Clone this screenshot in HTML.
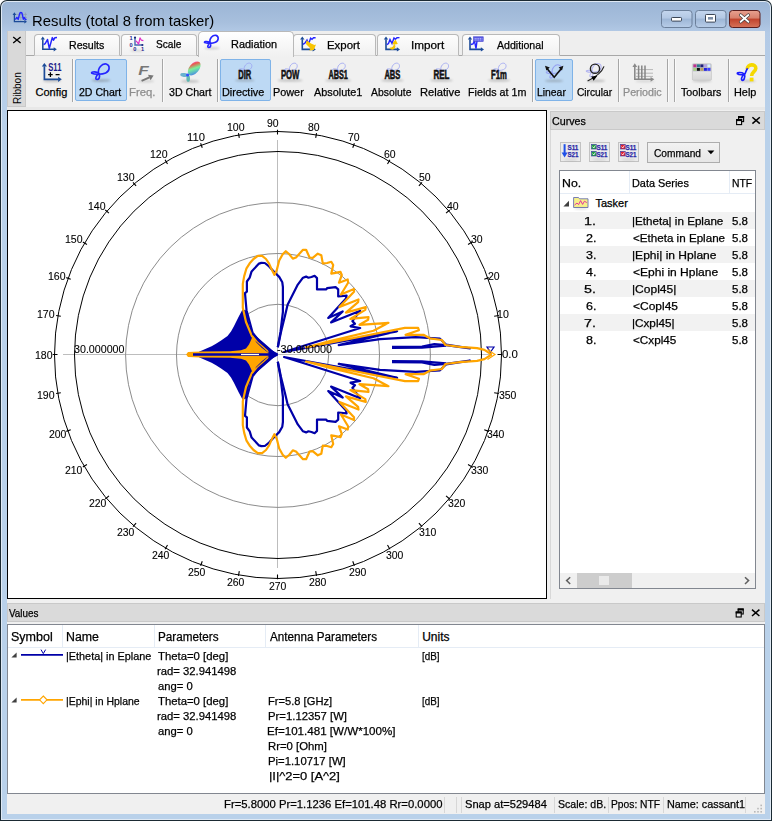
<!DOCTYPE html><html><head><meta charset="utf-8"><style>
*{box-sizing:border-box}
html,body{margin:0;padding:0;width:772px;height:821px;overflow:hidden;background:#fff}
body{position:relative;font-family:"Liberation Sans",sans-serif}
.a{position:absolute}
.t{position:absolute;white-space:pre;transform-origin:0 0;font-family:"Liberation Sans",sans-serif;-webkit-text-stroke:0.25px currentColor}
</style></head><body>
<div class="a" style="left:0;top:0;width:772px;height:821px;background:#1b2a33;border-radius:7px 7px 0 0"></div>
<div class="a" style="left:1px;top:1px;width:770px;height:819px;background:#dfe9f4;border-radius:6px 6px 0 0"></div>
<div class="a" style="left:2px;top:2px;width:768px;height:817px;background:linear-gradient(#9cb6d6 0px,#a7bfdd 20px,#b3cae6 31px,#b9d1ea 120px,#b9d1ea);border-radius:5px 5px 0 0"></div>
<div class="a" style="left:7px;top:31px;width:758px;height:783px;background:#f0f0f0"></div>
<div class="a" style="left:25px;top:31px;width:740px;height:24px;background:#eeeeee"></div>
<div class="a" style="left:25px;top:55px;width:740px;height:52px;background:#f0f0f0;border-top:1px solid #a8a8a8"></div>
<div class="a" style="left:7px;top:107px;width:758px;height:3px;background:#e8e8e8"></div>
<div class="a" style="left:7px;top:31px;width:19px;height:76px;background:#d9d9d9;border:1px solid #c9c9c9;border-top:none"></div>
<div class="a" style="left:34px;top:34px;width:86px;height:22px;background:linear-gradient(#fdfdfd,#f1f1f1);border:1px solid #b9b9b9;border-bottom:1px solid #d9d9d9;border-radius:4px 4px 0 0"></div>
<div class="a" style="left:121px;top:34px;width:76px;height:22px;background:linear-gradient(#fdfdfd,#f1f1f1);border:1px solid #b9b9b9;border-bottom:1px solid #d9d9d9;border-radius:4px 4px 0 0"></div>
<div class="a" style="left:293px;top:34px;width:83px;height:22px;background:linear-gradient(#fdfdfd,#f1f1f1);border:1px solid #b9b9b9;border-bottom:1px solid #d9d9d9;border-radius:4px 4px 0 0"></div>
<div class="a" style="left:377px;top:34px;width:82px;height:22px;background:linear-gradient(#fdfdfd,#f1f1f1);border:1px solid #b9b9b9;border-bottom:1px solid #d9d9d9;border-radius:4px 4px 0 0"></div>
<div class="a" style="left:462px;top:34px;width:98px;height:22px;background:linear-gradient(#fdfdfd,#f1f1f1);border:1px solid #b9b9b9;border-bottom:1px solid #d9d9d9;border-radius:4px 4px 0 0"></div>
<div class="a" style="left:198px;top:31px;width:96px;height:26px;background:linear-gradient(#ffffff,#f6f6f6 60%,#f0f0f0);border:1px solid #b9b9b9;border-bottom:none;border-radius:5px 5px 0 0"></div>
<div class="a" style="left:75px;top:59px;width:52px;height:42px;background:#bdd9f4;border:1px solid #7fb3e8;border-radius:2px"></div>
<div class="a" style="left:220px;top:59px;width:51px;height:42px;background:#bdd9f4;border:1px solid #7fb3e8;border-radius:2px"></div>
<div class="a" style="left:535px;top:59px;width:38px;height:42px;background:#bdd9f4;border:1px solid #7fb3e8;border-radius:2px"></div>
<div class="a" style="left:72px;top:59px;width:2px;height:43px;border-left:1px solid #a6a6a6;border-right:1px solid #fafafa"></div>
<div class="a" style="left:162px;top:59px;width:2px;height:43px;border-left:1px solid #a6a6a6;border-right:1px solid #fafafa"></div>
<div class="a" style="left:217px;top:59px;width:2px;height:43px;border-left:1px solid #a6a6a6;border-right:1px solid #fafafa"></div>
<div class="a" style="left:532px;top:59px;width:2px;height:43px;border-left:1px solid #a6a6a6;border-right:1px solid #fafafa"></div>
<div class="a" style="left:618px;top:59px;width:2px;height:43px;border-left:1px solid #a6a6a6;border-right:1px solid #fafafa"></div>
<div class="a" style="left:667px;top:59px;width:2px;height:43px;border-left:1px solid #a6a6a6;border-right:1px solid #fafafa"></div>
<div class="a" style="left:674px;top:59px;width:2px;height:43px;border-left:1px solid #a6a6a6;border-right:1px solid #fafafa"></div>
<div class="a" style="left:728px;top:59px;width:2px;height:43px;border-left:1px solid #a6a6a6;border-right:1px solid #fafafa"></div>
<div class="a" style="left:7px;top:110px;width:540px;height:489px;background:#fff;border:1px solid #000"></div>
<div class="a" style="left:550px;top:111px;width:215px;height:19px;background:#dadada;border:1px solid #c9c9c9"></div>
<div class="a" style="left:550px;top:130px;width:215px;height:469px;background:#f0f0f0;border-left:1px solid #d8d8d8"></div>
<div class="a" style="left:560px;top:142px;width:21px;height:20px;background:#ebebeb;border:1px solid #c2c2c2"></div>
<div class="a" style="left:589px;top:142px;width:21px;height:20px;background:#ebebeb;border:1px solid #c2c2c2"></div>
<div class="a" style="left:618px;top:142px;width:21px;height:20px;background:#ebebeb;border:1px solid #c2c2c2"></div>
<div class="a" style="left:647px;top:142px;width:73px;height:21px;background:linear-gradient(#f2f2f2,#e6e6e6);border:1px solid #adadad"></div>
<div class="a" style="left:559px;top:170px;width:197px;height:419px;background:#fff;border:1px solid #828790"></div>
<div class="a" style="left:560px;top:171px;width:195px;height:23px;background:#fff;border-bottom:1px solid #e5ecf5"></div>
<div class="a" style="left:629px;top:171px;width:1px;height:22px;background:#e5ecf5"></div>
<div class="a" style="left:729px;top:171px;width:1px;height:22px;background:#e5ecf5"></div>
<div class="a" style="left:560px;top:212px;width:195px;height:17px;background:#f2f2f2"></div>
<div class="a" style="left:560px;top:246px;width:195px;height:17px;background:#f2f2f2"></div>
<div class="a" style="left:560px;top:280px;width:195px;height:17px;background:#f2f2f2"></div>
<div class="a" style="left:560px;top:314px;width:195px;height:17px;background:#f2f2f2"></div>
<div class="a" style="left:560px;top:573px;width:195px;height:15px;background:#f0f0f0"></div>
<div class="a" style="left:577px;top:573px;width:55px;height:15px;background:#cdcdcd"></div>
<div class="a" style="left:599px;top:576px;width:10px;height:9px;background:#eaeaea"></div>
<div class="a" style="left:7px;top:603px;width:758px;height:19px;background:#dadada;border:1px solid #c9c9c9"></div>
<div class="a" style="left:7px;top:624px;width:758px;height:170px;background:#fff;border:1px solid #828790"></div>
<div class="a" style="left:8px;top:625px;width:756px;height:23px;background:#fff;border-bottom:1px solid #e5ecf5"></div>
<div class="a" style="left:62px;top:625px;width:1px;height:22px;background:#e5ecf5"></div>
<div class="a" style="left:154px;top:625px;width:1px;height:22px;background:#e5ecf5"></div>
<div class="a" style="left:265px;top:625px;width:1px;height:22px;background:#e5ecf5"></div>
<div class="a" style="left:418px;top:625px;width:1px;height:22px;background:#e5ecf5"></div>
<div class="a" style="left:444px;top:797px;width:1px;height:16px;background:#d7d7d7"></div>
<div class="a" style="left:456px;top:797px;width:1px;height:16px;background:#d7d7d7"></div>
<div class="a" style="left:461px;top:797px;width:1px;height:16px;background:#d7d7d7"></div>
<div class="a" style="left:554px;top:797px;width:1px;height:16px;background:#d7d7d7"></div>
<div class="a" style="left:608px;top:797px;width:1px;height:16px;background:#d7d7d7"></div>
<div class="a" style="left:663px;top:797px;width:1px;height:16px;background:#d7d7d7"></div>
<div class="a" style="left:745px;top:797px;width:1px;height:16px;background:#d7d7d7"></div>
<svg class="a" style="left:0;top:0" width="772" height="821" viewBox="0 0 772 821">
<line x1="63" y1="354.5" x2="492" y2="354.5" stroke="#bdbdbd" stroke-width="1"/>
<line x1="277.5" y1="140" x2="277.5" y2="568" stroke="#bdbdbd" stroke-width="1"/>
<circle cx="278.0" cy="355.0" r="50.7" fill="none" stroke="#8c8c8c" stroke-width="1"/>
<circle cx="278.0" cy="355.0" r="101.5" fill="none" stroke="#8c8c8c" stroke-width="1"/>
<circle cx="278.0" cy="355.0" r="152.4" fill="none" stroke="#8c8c8c" stroke-width="1"/>
<circle cx="278.0" cy="355.0" r="203.5" fill="none" stroke="#000" stroke-width="1"/>
<circle cx="278.0" cy="355.0" r="223.5" fill="none" stroke="#000" stroke-width="1"/>
<path d="M497.50,354.50L502.30,354.50M494.16,316.30L498.88,315.46M484.23,279.26L488.74,277.61M468.03,244.50L472.18,242.10M446.03,213.09L449.71,210.00M418.91,185.97L422.00,182.29M387.50,163.97L389.90,159.82M352.74,147.77L354.39,143.26M315.70,137.84L316.54,133.12M277.50,134.50L277.50,129.70M239.30,137.84L238.46,133.12M202.26,147.77L200.61,143.26M167.50,163.97L165.10,159.82M136.09,185.97L133.00,182.29M108.97,213.09L105.29,210.00M86.97,244.50L82.82,242.10M70.77,279.26L66.26,277.61M60.84,316.30L56.12,315.46M57.50,354.50L52.70,354.50M60.84,392.70L56.12,393.54M70.77,429.74L66.26,431.39M86.97,464.50L82.82,466.90M108.97,495.91L105.29,499.00M136.09,523.03L133.00,526.71M167.50,545.03L165.10,549.18M202.26,561.23L200.61,565.74M239.30,571.16L238.46,575.88M277.50,574.50L277.50,579.30M315.70,571.16L316.54,575.88M352.74,561.23L354.39,565.74M387.50,545.03L389.90,549.18M418.91,523.03L422.00,526.71M446.03,495.91L449.71,499.00M468.03,464.50L472.18,466.90M484.23,429.74L488.74,431.39M494.16,392.70L498.88,393.54" stroke="#000" stroke-width="1.1" fill="none"/>
<polygon points="199.0,354.5 199.0,351.8 203.0,350.0 207.0,348.3 211.6,346.2 216.0,343.8 221.1,340.6 227.5,335.9 231.0,331.5 233.8,326.4 238.5,316.9 242.5,309.5 246.5,310.6 249.6,325.0 252.7,333.0 277.3,354.5 277.3,354.5 252.7,376.0 249.6,384.0 246.5,398.4 242.5,399.5 238.5,392.1 233.8,382.6 231.0,377.5 227.5,373.1 221.1,368.4 216.0,365.2 211.6,362.8 207.0,360.7 203.0,359.0 199.0,357.2 199.0,354.5" fill="#0000a8"/>
<polygon points="186.1,354.5 188.0,352.0 200.0,351.5 230.0,351.2 241.0,350.2 246.0,348.5 249.0,344.5 251.5,339.0 253.0,334.0 256.0,342.0 262.0,348.0 268.0,352.5 271.0,354.5 271.0,354.5 268.0,356.5 262.0,361.0 256.0,367.0 253.0,375.0 251.5,370.0 249.0,364.5 246.0,360.5 241.0,358.8 230.0,357.8 200.0,357.5 188.0,357.0 186.1,354.5" fill="#ffa500"/>
<line x1="193" y1="354.5" x2="276" y2="354.5" stroke="#0000a8" stroke-width="2.3"/>
<line x1="241" y1="354.5" x2="259" y2="354.5" stroke="#fff" stroke-width="1.2"/>
<polyline points="252.7,333.0 246.5,310.2 245.0,293.2 246.9,291.6 246.9,281.5 249.7,277.6 251.6,271.4 259.0,263.6 261.3,262.9 264.8,263.0 269.1,266.4 274.5,272.2 279.2,276.9 282.3,282.3 282.9,287.0 282.9,312.0 280.5,332.0 277.8,347.3" fill="none" stroke="#0000a8" stroke-width="2.2" stroke-linejoin="round"/>
<polyline points="252.7,376.0 246.5,398.8 245.0,415.8 246.9,417.4 246.9,427.5 249.7,431.4 251.6,437.6 259.0,445.4 261.3,446.1 264.8,446.0 269.1,442.6 274.5,436.8 279.2,432.1 282.3,426.7 282.9,422.0 282.9,397.0 280.5,377.0 277.8,361.7" fill="none" stroke="#0000a8" stroke-width="2.2" stroke-linejoin="round"/>
<polyline points="277.8,347.3 281.0,332.0 285.0,315.8 287.6,304.7 297.8,284.6 303.0,277.7 306.1,276.6 308.4,277.7 311.5,277.0 314.6,275.8 317.0,278.1 317.0,289.4 326.3,289.4 327.1,288.2 335.6,287.1 338.2,289.4 338.2,296.5 346.6,295.6 346.0,298.5 328.2,317.9 342.7,311.4 331.1,322.4 360.2,310.8 352.4,321.1 355.0,323.7 350.5,326.3 360.2,328.0 284.0,352.0 397.1,331.3 338.7,345.1 380.0,339.1 415.7,337.1 440.0,338.7 446.0,344.5 470.0,348.3 446.0,345.2 434.4,344.2 422.0,346.6 392.0,346.8" fill="none" stroke="#0000a8" stroke-width="2.2" stroke-linejoin="round"/>
<polyline points="277.8,361.7 281.0,377.0 285.0,393.2 287.6,404.3 297.8,424.4 303.0,431.3 306.1,432.4 308.4,431.3 311.5,432.0 314.6,433.2 317.0,430.9 317.0,419.6 326.3,419.6 327.1,420.8 335.6,421.9 338.2,419.6 338.2,412.5 346.6,413.4 346.0,410.5 328.2,391.1 342.7,397.6 331.1,386.6 360.2,398.2 352.4,387.9 355.0,385.3 350.5,382.7 360.2,381.0 284.0,357.0 397.1,377.7 338.7,363.9 380.0,369.9 415.7,371.9 440.0,370.3 446.0,364.5 470.0,360.7 446.0,363.8 434.4,364.8 422.0,362.4 392.0,362.2" fill="none" stroke="#0000a8" stroke-width="2.2" stroke-linejoin="round"/>
<polyline points="392.0,347.9 422.0,347.6 446.0,345.6" fill="none" stroke="#0000a8" stroke-width="2.2" stroke-linejoin="round"/>
<polyline points="392.0,361.1 422.0,361.4 446.0,363.4" fill="none" stroke="#0000a8" stroke-width="2.2" stroke-linejoin="round"/>
<polyline points="269.3,352.0 251.9,336.2 246.0,322.0 242.8,307.7 242.8,283.9 244.2,276.1 246.5,268.3 249.7,263.3 253.5,259.0 257.8,255.9 262.1,255.9 266.0,259.0 269.1,263.6 272.2,270.6 274.5,274.9 276.8,269.9 279.2,260.5 282.7,254.3 285.8,251.2 289.3,254.3 292.8,258.6 296.0,257.5 303.0,249.8 306.1,249.8 309.6,257.5 312.7,257.9 317.8,253.7 321.3,255.2 322.8,263.4 327.1,263.0 331.3,261.8 333.2,265.0 331.3,273.6 335.6,272.8 340.4,271.8 341.8,275.0 339.0,282.7 347.7,279.5 348.1,282.7 340.9,294.5 354.0,289.0 354.0,291.7 339.5,307.1 358.5,299.4 358.1,302.2 345.9,312.6 365.8,307.1 365.3,309.9 350.4,318.9 368.5,317.1 368.1,319.8 359.5,324.8 388.5,322.8 373.5,330.7 330.0,341.1 306.0,347.5 404.9,327.8 418.1,327.8 418.9,330.2 405.6,334.8 423.5,334.8 429.7,338.3 441.8,340.0 445.4,345.0 459.9,346.8 477.1,348.1 484.4,349.9 491.6,354.5" fill="none" stroke="#ffa500" stroke-width="2.2" stroke-linejoin="round"/>
<polyline points="269.3,357.0 251.9,372.8 246.0,387.0 242.8,401.3 242.8,425.1 244.2,432.9 246.5,440.7 249.7,445.7 253.5,450.0 257.8,453.1 262.1,453.1 266.0,450.0 269.1,445.4 272.2,438.4 274.5,434.1 276.8,439.1 279.2,448.5 282.7,454.7 285.8,457.8 289.3,454.7 292.8,450.4 296.0,451.5 303.0,459.2 306.1,459.2 309.6,451.5 312.7,451.1 317.8,455.3 321.3,453.8 322.8,445.6 327.1,446.0 331.3,447.2 333.2,444.0 331.3,435.4 335.6,436.2 340.4,437.2 341.8,434.0 339.0,426.3 347.7,429.5 348.1,426.3 340.9,414.5 354.0,420.0 354.0,417.3 339.5,401.9 358.5,409.6 358.1,406.8 345.9,396.4 365.8,401.9 365.3,399.1 350.4,390.1 368.5,391.9 368.1,389.2 359.5,384.2 388.5,386.2 373.5,378.3 330.0,367.9 306.0,361.5 404.9,381.2 418.1,381.2 418.9,378.8 405.6,374.2 423.5,374.2 429.7,370.7 441.8,369.0 445.4,364.0 459.9,362.2 477.1,360.9 484.4,359.1 491.6,354.5" fill="none" stroke="#ffa500" stroke-width="2.2" stroke-linejoin="round"/>
<polyline points="277.5,354.5 270.6,351.1 259.0,340.9 252.7,333.0" fill="none" stroke="#0000a8" stroke-width="2.4" stroke-linejoin="round"/>
<polyline points="277.5,354.5 270.6,357.9 259.0,368.1 252.7,376.0" fill="none" stroke="#0000a8" stroke-width="2.4" stroke-linejoin="round"/>
<polygon points="268.5,349.6 278.1,354.5 268.5,359.2" fill="#0000a8"/>
<path d="M487,347 L494,347 L490.5,352 Z" fill="none" stroke="#0000a8" stroke-width="1.2"/>
<path d="M487.5,349.5 L495,354.5 L487.5,359.5" fill="none" stroke="#ffa500" stroke-width="1.2"/>
</svg>
<svg class="a" style="left:0;top:0" width="772" height="821" viewBox="0 0 772 821">
<defs><filter id="blur1" x="-50%" y="-200%" width="200%" height="500%"><feGaussianBlur stdDeviation="0.9"/></filter>
<linearGradient id="g3d" x1="0" y1="1" x2="1" y2="0"><stop offset="0" stop-color="#3050ff"/><stop offset="0.3" stop-color="#50b8c0"/><stop offset="0.5" stop-color="#70f090"/><stop offset="0.75" stop-color="#e85040"/><stop offset="1" stop-color="#ff30f0"/></linearGradient>
<linearGradient id="gtb" x1="0" y1="0" x2="0" y2="1"><stop offset="0" stop-color="#f4f4f4"/><stop offset="1" stop-color="#d6d6d6"/></linearGradient>
</defs>
<path d="M16,14.4 H27 M16,17.4 H27 M20.8,12.5 V21 M25.4,12.5 V21" stroke="#8a94a4" stroke-width="0.7" opacity="0.8"/>
<path d="M14.4,14.700000000000001 V21.7 H24.6" fill="none" stroke="#1b4a98" stroke-width="1.3"/><path d="M12.6,15.000000000000002 L14.4,12.3 L16.2,15.000000000000002 Z" fill="#1b4a98"/><path d="M24.3,19.9 L27,21.7 L24.3,23.5 Z" fill="#1b4a98"/>
<path d="M15.3,19.6 L16.8,17.4 L18.2,19.4 L19.5,14.2 C19.9,11.9 21.9,11.9 22.3,14.2 L23.3,19.2 L24.3,17.6 L25.4,19.6 L26.6,19.4" fill="none" stroke="#2424ff" stroke-width="1.4" stroke-linejoin="round"/>
<text transform="translate(21.4,103.9) rotate(-90)" font-family="Liberation Sans" font-size="11.2" fill="#000" textLength="31.6" lengthAdjust="spacingAndGlyphs">Ribbon</text>
<path d="M13.2,37 L20.6,43 M20.6,37 L13.2,43" stroke="#000" stroke-width="1.3"/>
<path d="M42.8,39.199999999999996 V49.3 H54.0" fill="none" stroke="#1b4a98" stroke-width="1.5"/><path d="M40.699999999999996,39.49999999999999 L42.8,36.4 L44.9,39.49999999999999 Z" fill="#1b4a98"/><path d="M53.7,47.199999999999996 L56.8,49.3 L53.7,51.4 Z" fill="#1b4a98"/>
<path d="M43.6,44.6 L45.2,43.6 L47.5,39.5 L49.3,48.4 L52.3,37.6 L53.5,40.2 L54.8,37.8 L57,37.6" fill="none" stroke="#2424ff" stroke-width="1.5" stroke-linejoin="round"/>
<ellipse cx="137" cy="50.6" rx="7" ry="0.8" fill="#606060" opacity="0.25" filter="url(#blur1)"/>
<path d="M135,37.6 V45 H142.4" fill="none" stroke="#4468b0" stroke-width="1.4"/>
<circle cx="135" cy="37.6" r="1.1" fill="#1a2a80"/><circle cx="142.4" cy="45" r="1.1" fill="#1a2a80"/>
<path d="M135.6,40.6 L137.2,42.2 L138.6,44.2 L140,37.8 L141.4,40.2 L143.4,40.6" fill="none" stroke="#e030c8" stroke-width="1.2" stroke-linejoin="round"/>
<text x="129.6" y="40.4" font-family="Liberation Sans" font-weight="bold" font-size="5.6" fill="#262690">1</text>
<text x="129.6" y="47.2" font-family="Liberation Sans" font-weight="bold" font-size="5.6" fill="#262690">0</text>
<text x="133.2" y="51.2" font-family="Liberation Sans" font-weight="bold" font-size="5.6" fill="#262690">0</text>
<text x="141" y="51.2" font-family="Liberation Sans" font-weight="bold" font-size="5.6" fill="#262690">1</text>
<ellipse cx="212" cy="48.3" rx="7.5" ry="1.0" fill="#606060" opacity="0.3" filter="url(#blur1)"/>
<path transform="translate(203.8,35.0) scale(0.78)" d="M8,10.2 C6.5,4.5 11.5,-0.2 15.5,0.5 C19.5,1.5 19.5,7.5 15,9.4 C11.5,10.9 4,11.3 1.2,9.8 C-0.3,8.6 3.5,7.8 7,8.9 C9.6,9.9 9.5,15.8 6.5,16 C3.8,16 5.5,12 8,10.2 Z" fill="none" stroke="#2424ff" stroke-width="2.05" opacity="1.0"/>
<path d="M302.3,39.3 V49.4 H313.0" fill="none" stroke="#1b4a98" stroke-width="1.6"/><path d="M300.1,39.599999999999994 L302.3,36.5 L304.5,39.599999999999994 Z" fill="#1b4a98"/><path d="M312.7,47.199999999999996 L315.8,49.4 L312.7,51.6 Z" fill="#1b4a98"/>
<path d="M303,44.4 L305,43 L307,40 L308.6,44 L310.6,38.2 L312,39.4 L313.5,37.8 L315.6,37.8" fill="none" stroke="#2424ff" stroke-width="1.4"/>
<path d="M306.5,40.2 L311,43.5 L314.5,45 L316,44.5 L313.8,50 L309.2,50.6 L310.5,48.5 L306,44 Z" fill="#f8c400"/>
<path d="M386,39.3 V49.4 H397.2" fill="none" stroke="#1b4a98" stroke-width="1.6"/><path d="M383.8,39.599999999999994 L386,36.5 L388.2,39.599999999999994 Z" fill="#1b4a98"/><path d="M396.9,47.199999999999996 L400,49.4 L396.9,51.6 Z" fill="#1b4a98"/>
<path d="M386.8,44.6 L388.5,43.5 L390,39.5 L392,43.5 L394,37.9 L395.4,39.2 L397,37.8 L399.5,37.6" fill="none" stroke="#2424ff" stroke-width="1.4"/>
<path d="M389.5,48 C391,50.5 395,50.5 395.5,46 L394.5,44.5 L397.8,44 L395.5,39.6 L392.3,43.6 L393.6,44.2 C393.8,47 391.5,47.5 389.5,48 Z" fill="#f8c400"/>
<path d="M470,39.3 V49.4 H481.2" fill="none" stroke="#1b4a98" stroke-width="1.6"/><path d="M467.8,39.599999999999994 L470,36.5 L472.2,39.599999999999994 Z" fill="#1b4a98"/><path d="M480.9,47.199999999999996 L484,49.4 L480.9,51.6 Z" fill="#1b4a98"/>
<path d="M470.8,44.5 L473,43.8 L474.5,41 L476,48.6 L477,41" fill="none" stroke="#2424ff" stroke-width="1.4"/>
<rect x="473.6" y="36.8" width="9.6" height="4.6" fill="#5a5ae8" stroke="#4040c8" stroke-width="0.6"/>
<path d="M474.6,38.6 H482.4 M474.6,40 H482.4" stroke="#d8d8ff" stroke-width="0.7" stroke-dasharray="1.2,0.6"/>
<ellipse cx="52" cy="80.8" rx="9.5" ry="1.3" fill="#606060" opacity="0.35" filter="url(#blur1)"/>
<path d="M44.4,66.3 V79.3 H58.4" fill="none" stroke="#1b4a98" stroke-width="1.7"/><path d="M41.8,66.6 L44.4,62.9 L47.0,66.6 Z" fill="#1b4a98"/><path d="M58.1,76.7 L61.8,79.3 L58.1,81.89999999999999 Z" fill="#1b4a98"/>
<text x="48.2" y="70.8" font-family="Liberation Sans" font-weight="bold" font-size="10" fill="#1c1c8c" textLength="13.2" lengthAdjust="spacingAndGlyphs">S11</text>
<path d="M48.1,74.6 H52.7 M50.4,72.2 V77 M55.6,74.6 H59.6" stroke="#000" stroke-width="1.3"/>
<ellipse cx="101" cy="80.6" rx="9.5" ry="1.4" fill="#606060" opacity="0.4" filter="url(#blur1)"/>
<path transform="translate(90.7,63.5) scale(1.0)" d="M8,10.2 C6.5,4.5 11.5,-0.2 15.5,0.5 C19.5,1.5 19.5,7.5 15,9.4 C11.5,10.9 4,11.3 1.2,9.8 C-0.3,8.6 3.5,7.8 7,8.9 C9.6,9.9 9.5,15.8 6.5,16 C3.8,16 5.5,12 8,10.2 Z" fill="none" stroke="#2424ff" stroke-width="1.60" opacity="1.0"/>
<ellipse cx="146" cy="81.3" rx="8" ry="1.0" fill="#606060" opacity="0.25" filter="url(#blur1)"/>
<text x="138.2" y="74.8" font-family="Liberation Sans" font-weight="bold" font-style="italic" font-size="13.5" fill="#777" textLength="10.5" lengthAdjust="spacingAndGlyphs">F</text>
<path d="M141.6,80.8 L149.5,77.3" stroke="#777" stroke-width="2"/><path d="M148,74.8 L153.6,75.6 L150.6,80.2 Z" fill="#777"/>
<ellipse cx="190" cy="81.3" rx="9.5" ry="1.3" fill="#606060" opacity="0.35" filter="url(#blur1)"/>
<ellipse cx="194.2" cy="68.4" rx="8.2" ry="4.8" transform="rotate(-50 194.2 68.4)" fill="url(#g3d)" opacity="0.92"/>
<ellipse cx="184" cy="75" rx="3.8" ry="1.9" transform="rotate(8 184 75)" fill="#50a8c8" opacity="0.85"/>
<ellipse cx="188.2" cy="78.4" rx="1.8" ry="3.4" fill="#48b0a8" opacity="0.85"/>
<circle cx="187.6" cy="75" r="1.6" fill="#3050ff"/>
<ellipse cx="244.8" cy="80.4" rx="9.799999999999997" ry="1.2" fill="#606060" opacity="0.35" filter="url(#blur1)"/>
<path transform="translate(238.60000000000002,62.8) scale(0.72)" d="M8,10.2 C6.5,4.5 11.5,-0.2 15.5,0.5 C19.5,1.5 19.5,7.5 15,9.4 C11.5,10.9 4,11.3 1.2,9.8 C-0.3,8.6 3.5,7.8 7,8.9 C9.6,9.9 9.5,15.8 6.5,16 C3.8,16 5.5,12 8,10.2 Z" fill="none" stroke="#9aa2f2" stroke-width="1.25" opacity="0.85"/>
<text x="238.3" y="79.4" font-family="Liberation Sans" font-weight="bold" font-size="12" fill="#111" stroke="#111" stroke-width="0.55" textLength="13.0" lengthAdjust="spacingAndGlyphs">DIR</text>
<ellipse cx="290.15" cy="80.4" rx="12.549999999999983" ry="1.2" fill="#606060" opacity="0.35" filter="url(#blur1)"/>
<path transform="translate(283.95,62.8) scale(0.72)" d="M8,10.2 C6.5,4.5 11.5,-0.2 15.5,0.5 C19.5,1.5 19.5,7.5 15,9.4 C11.5,10.9 4,11.3 1.2,9.8 C-0.3,8.6 3.5,7.8 7,8.9 C9.6,9.9 9.5,15.8 6.5,16 C3.8,16 5.5,12 8,10.2 Z" fill="none" stroke="#9aa2f2" stroke-width="1.25" opacity="0.85"/>
<text x="280.90000000000003" y="79.4" font-family="Liberation Sans" font-weight="bold" font-size="12" fill="#111" stroke="#111" stroke-width="0.55" textLength="18.5" lengthAdjust="spacingAndGlyphs">POW</text>
<ellipse cx="338.2" cy="80.4" rx="13.0" ry="1.2" fill="#606060" opacity="0.35" filter="url(#blur1)"/>
<path transform="translate(332.0,62.8) scale(0.72)" d="M8,10.2 C6.5,4.5 11.5,-0.2 15.5,0.5 C19.5,1.5 19.5,7.5 15,9.4 C11.5,10.9 4,11.3 1.2,9.8 C-0.3,8.6 3.5,7.8 7,8.9 C9.6,9.9 9.5,15.8 6.5,16 C3.8,16 5.5,12 8,10.2 Z" fill="none" stroke="#9aa2f2" stroke-width="1.25" opacity="0.85"/>
<text x="328.5" y="79.4" font-family="Liberation Sans" font-weight="bold" font-size="12" fill="#111" stroke="#111" stroke-width="0.55" textLength="19.4" lengthAdjust="spacingAndGlyphs">ABS1</text>
<ellipse cx="392.4" cy="80.4" rx="11.299999999999983" ry="1.2" fill="#606060" opacity="0.35" filter="url(#blur1)"/>
<path transform="translate(386.2,62.8) scale(0.72)" d="M8,10.2 C6.5,4.5 11.5,-0.2 15.5,0.5 C19.5,1.5 19.5,7.5 15,9.4 C11.5,10.9 4,11.3 1.2,9.8 C-0.3,8.6 3.5,7.8 7,8.9 C9.6,9.9 9.5,15.8 6.5,16 C3.8,16 5.5,12 8,10.2 Z" fill="none" stroke="#9aa2f2" stroke-width="1.25" opacity="0.85"/>
<text x="384.40000000000003" y="79.4" font-family="Liberation Sans" font-weight="bold" font-size="12" fill="#111" stroke="#111" stroke-width="0.55" textLength="16.0" lengthAdjust="spacingAndGlyphs">ABS</text>
<ellipse cx="441.5" cy="80.4" rx="11.300000000000011" ry="1.2" fill="#606060" opacity="0.35" filter="url(#blur1)"/>
<path transform="translate(435.3,62.8) scale(0.72)" d="M8,10.2 C6.5,4.5 11.5,-0.2 15.5,0.5 C19.5,1.5 19.5,7.5 15,9.4 C11.5,10.9 4,11.3 1.2,9.8 C-0.3,8.6 3.5,7.8 7,8.9 C9.6,9.9 9.5,15.8 6.5,16 C3.8,16 5.5,12 8,10.2 Z" fill="none" stroke="#9aa2f2" stroke-width="1.25" opacity="0.85"/>
<text x="433.5" y="79.4" font-family="Liberation Sans" font-weight="bold" font-size="12" fill="#111" stroke="#111" stroke-width="0.55" textLength="16.0" lengthAdjust="spacingAndGlyphs">REL</text>
<ellipse cx="499.0" cy="80.4" rx="11.199999999999989" ry="1.2" fill="#606060" opacity="0.35" filter="url(#blur1)"/>
<path transform="translate(492.8,62.8) scale(0.72)" d="M8,10.2 C6.5,4.5 11.5,-0.2 15.5,0.5 C19.5,1.5 19.5,7.5 15,9.4 C11.5,10.9 4,11.3 1.2,9.8 C-0.3,8.6 3.5,7.8 7,8.9 C9.6,9.9 9.5,15.8 6.5,16 C3.8,16 5.5,12 8,10.2 Z" fill="none" stroke="#9aa2f2" stroke-width="1.25" opacity="0.85"/>
<text x="491.1" y="79.4" font-family="Liberation Sans" font-weight="bold" font-size="12" fill="#111" stroke="#111" stroke-width="0.55" textLength="15.8" lengthAdjust="spacingAndGlyphs">F1m</text>
<ellipse cx="554" cy="80.8" rx="9.5" ry="1.3" fill="#606060" opacity="0.35" filter="url(#blur1)"/>
<path transform="translate(545.5,64.5) scale(0.85)" d="M8,10.2 C6.5,4.5 11.5,-0.2 15.5,0.5 C19.5,1.5 19.5,7.5 15,9.4 C11.5,10.9 4,11.3 1.2,9.8 C-0.3,8.6 3.5,7.8 7,8.9 C9.6,9.9 9.5,15.8 6.5,16 C3.8,16 5.5,12 8,10.2 Z" fill="none" stroke="#8890f0" stroke-width="1.18" opacity="0.8"/>
<path d="M546.8,68.3 L554.2,77.2 L561.6,68.3" fill="none" stroke="#111" stroke-width="1.6"/>
<path d="M545,65.8 L549.8,67.4 L546.4,70.6 Z M563.4,65.8 L558.6,67.4 L562,70.6 Z" fill="#111"/>
<ellipse cx="596" cy="80.8" rx="9.5" ry="1.3" fill="#606060" opacity="0.35" filter="url(#blur1)"/>
<path transform="translate(585.5,63.2) scale(0.85)" d="M8,10.2 C6.5,4.5 11.5,-0.2 15.5,0.5 C19.5,1.5 19.5,7.5 15,9.4 C11.5,10.9 4,11.3 1.2,9.8 C-0.3,8.6 3.5,7.8 7,8.9 C9.6,9.9 9.5,15.8 6.5,16 C3.8,16 5.5,12 8,10.2 Z" fill="none" stroke="#a0a4f0" stroke-width="1.18" opacity="0.8"/>
<circle cx="595" cy="68.7" r="4.6" fill="none" stroke="#222" stroke-width="1.4"/>
<path d="M604,66.4 C602,72 598,76 587.6,81" fill="none" stroke="#222" stroke-width="1.2"/><path d="M591.2,76.6 L597.4,75.8 L593.6,80.8 Z" fill="#000"/>
<ellipse cx="645" cy="81.3" rx="9.5" ry="1.0" fill="#606060" opacity="0.2" filter="url(#blur1)"/>
<path d="M636,69.6 H653 M636,73.2 H653 M636,76.4 H653" fill="none" stroke="#a8a8a8" stroke-width="0.8"/><path d="M634.8,66.6 V79.3 H651.2 M638.6,65.6 V79.3 M641.8,65.6 V79.3 M645,65.6 V79.3" fill="none" stroke="#858585" stroke-width="1.5"/>
<path d="M632.4,67 L634.8,63.3 L637.2,67 Z M650.6,76.9 L654.3,79.3 L650.6,81.7 Z" fill="#8a8a8a"/>
<ellipse cx="702" cy="81" rx="10" ry="1.2" fill="#606060" opacity="0.3" filter="url(#blur1)"/>
<rect x="692.4" y="63.6" width="19" height="16.6" rx="1" fill="url(#gtb)" stroke="#c6c6c6" stroke-width="0.8"/>
<rect x="692.8" y="64" width="18.2" height="7.4" fill="#b8b8c8"/>
<rect x="693.4" y="64.4" width="3" height="2.8" fill="#c0308a"/>
<rect x="696.9" y="64.4" width="3" height="2.8" fill="#2a7a8a"/>
<rect x="700.4" y="64.4" width="3" height="2.8" fill="#1e1e7a"/>
<rect x="703.9" y="64.4" width="3" height="2.8" fill="#b0a0e0"/>
<rect x="707.4" y="64.4" width="3" height="2.8" fill="#d8f0ff"/>
<rect x="693.4" y="68" width="3" height="2.8" fill="#a8d080"/>
<rect x="696.9" y="68" width="3" height="2.8" fill="#111111"/>
<rect x="700.4" y="68" width="3" height="2.8" fill="#b8a060"/>
<rect x="703.9" y="68" width="3" height="2.8" fill="#2020e0"/>
<rect x="707.4" y="68" width="3" height="2.8" fill="#4040ff"/>
<ellipse cx="747" cy="81" rx="9" ry="1.2" fill="#606060" opacity="0.3" filter="url(#blur1)"/>
<path d="M747.3,69 C747,63.8 756,63.4 755.8,68.4 C755.6,71.6 751.6,71.8 751.6,76" fill="none" stroke="#f5d800" stroke-width="3.6"/><rect x="749.7" y="77.6" width="3.8" height="3.8" fill="#f8dc00"/>
<path d="M747.6,68.2 C746,70.5 745.5,73 744.8,74.2 C742.5,74.8 738.5,74.8 737.3,73.6 C736.8,72.2 741.5,72 744.2,73.8 C745.2,75.6 744.6,80.4 742.4,80.4 C740.6,80.2 741.6,76.4 744.2,74.2" fill="none" stroke="#1a1aff" stroke-width="1.6"/>
<rect x="738.6" y="116.6" width="5" height="5" fill="#dadada" stroke="#000" stroke-width="1.1"/><rect x="738.1" y="116.1" width="6" height="2" fill="#000"/>
<rect x="736.6" y="119.6" width="5" height="5" fill="#e6e6e6" stroke="#000" stroke-width="1.1"/><rect x="736.1" y="119.1" width="6" height="2" fill="#000"/>
<path d="M752.4,117.2 L759.8,123.6 M759.8,117.2 L752.4,123.6" stroke="#000" stroke-width="1.5"/>
<rect x="738.2" y="609.0" width="5" height="5" fill="#dadada" stroke="#000" stroke-width="1.1"/><rect x="737.7" y="608.5" width="6" height="2" fill="#000"/>
<rect x="736.2" y="612.0" width="5" height="5" fill="#e6e6e6" stroke="#000" stroke-width="1.1"/><rect x="735.7" y="611.5" width="6" height="2" fill="#000"/>
<path d="M752.0,609.6 L759.4,616.0 M759.4,609.6 L752.0,616.0" stroke="#000" stroke-width="1.5"/>
<path d="M564.6,144.2 V154" stroke="#1e50e8" stroke-width="2"/><path d="M561.6,152.6 L564.6,157.6 L567.6,152.6 Z" fill="#1e50e8"/>
<text x="567.4" y="149.8" font-family="Liberation Sans" font-weight="bold" font-size="7.4" fill="#2a2aa8" stroke="#2a2aa8" stroke-width="0.25" textLength="11" lengthAdjust="spacingAndGlyphs">S11</text>
<text x="567.4" y="157.3" font-family="Liberation Sans" font-weight="bold" font-size="7.4" fill="#2a2aa8" stroke="#2a2aa8" stroke-width="0.25" textLength="11" lengthAdjust="spacingAndGlyphs">S21</text>
<ellipse cx="570.5" cy="159.6" rx="7" ry="0.7" fill="#606060" opacity="0.25" filter="url(#blur1)"/>
<rect x="591.6" y="144.4" width="4.6" height="4.6" fill="#20a040" stroke="#3a3aa0" stroke-width="0.6"/><rect x="591.6" y="151.4" width="4.6" height="4.6" fill="#20a040" stroke="#3a3aa0" stroke-width="0.6"/>
<path d="M592.6,146.6 L593.8,148 L595.4,145.4 M592.6,153.6 L593.8,155 L595.4,152.4" fill="none" stroke="#fff" stroke-width="0.8"/>
<text x="596.4" y="149.8" font-family="Liberation Sans" font-weight="bold" font-size="7.4" fill="#2a2aa8" stroke="#2a2aa8" stroke-width="0.25" textLength="11" lengthAdjust="spacingAndGlyphs">S11</text>
<text x="596.4" y="157.3" font-family="Liberation Sans" font-weight="bold" font-size="7.4" fill="#2a2aa8" stroke="#2a2aa8" stroke-width="0.25" textLength="11" lengthAdjust="spacingAndGlyphs">S21</text>
<ellipse cx="599.5" cy="159.6" rx="7" ry="0.7" fill="#606060" opacity="0.25" filter="url(#blur1)"/>
<rect x="620.6" y="144.4" width="4.6" height="4.6" fill="#e02030" stroke="#3a3aa0" stroke-width="0.6"/><rect x="620.6" y="151.4" width="4.6" height="4.6" fill="#e02030" stroke="#3a3aa0" stroke-width="0.6"/>
<path d="M621.6,146.6 L622.8,148 L624.4,145.4 M621.6,153.6 L622.8,155 L624.4,152.4" fill="none" stroke="#fff" stroke-width="0.8"/>
<text x="625.4" y="149.8" font-family="Liberation Sans" font-weight="bold" font-size="7.4" fill="#2a2aa8" stroke="#2a2aa8" stroke-width="0.25" textLength="11" lengthAdjust="spacingAndGlyphs">S11</text>
<text x="625.4" y="157.3" font-family="Liberation Sans" font-weight="bold" font-size="7.4" fill="#2a2aa8" stroke="#2a2aa8" stroke-width="0.25" textLength="11" lengthAdjust="spacingAndGlyphs">S21</text>
<ellipse cx="628.5" cy="159.6" rx="7" ry="0.7" fill="#606060" opacity="0.25" filter="url(#blur1)"/>
<path d="M707.4,150.4 H714.4 L710.9,154.2 Z" fill="#000"/>
<path d="M569,200.8 V206.4 H563.4 Z" fill="#404040"/>
<path d="M573.6,197.5 H578.5 L579.5,198.8 H588 V207.5 H573.6 Z" fill="#f6f08a" stroke="#6a70b0" stroke-width="0.9"/>
<path d="M574.6,205 L577,203 L578.6,204.6 L580.6,200.6 L582.6,204.4 L584.4,201.2 L586.8,202.6" fill="none" stroke="#e020a0" stroke-width="0.9"/>
<ellipse cx="581" cy="208.6" rx="7" ry="0.7" fill="#606060" opacity="0.3" filter="url(#blur1)"/>
<path d="M16.6,652.4 V657.6 H11.4 Z" fill="#404040"/>
<path d="M16.6,697.4 V702.6 H11.4 Z" fill="#404040"/>
<path d="M21,654.8 H63" stroke="#0000a8" stroke-width="1.8"/>
<path d="M41,649.6 L43.3,653.6 L45.6,649.6" fill="none" stroke="#0000a8" stroke-width="1"/>
<path d="M21,699.8 H63" stroke="#ffa500" stroke-width="1.8"/>
<path d="M43.3,696 L47,699.8 L43.3,703.6 L39.6,699.8 Z" fill="#fff" stroke="#ffa500" stroke-width="1.1"/>
<path d="M570.2,577.2 L566.6,580.6 L570.2,584" fill="none" stroke="#606060" stroke-width="1.5"/>
<path d="M745,577.2 L748.6,580.6 L745,584" fill="none" stroke="#606060" stroke-width="1.5"/>
<rect x="760.4" y="804.6" width="1.6" height="1.6" fill="#b8b8b8"/>
<rect x="757.2" y="807.8" width="1.6" height="1.6" fill="#b8b8b8"/>
<rect x="760.4" y="807.8" width="1.6" height="1.6" fill="#b8b8b8"/>
<rect x="754" y="811" width="1.6" height="1.6" fill="#b8b8b8"/>
<rect x="757.2" y="811" width="1.6" height="1.6" fill="#b8b8b8"/>
<rect x="760.4" y="811" width="1.6" height="1.6" fill="#b8b8b8"/>
<rect x="661.5" y="10.5" width="30.5" height="17" rx="3" fill="url(#gbtn)" stroke="#6b7f9a" stroke-width="1"/>
<rect x="695.5" y="10.5" width="30.5" height="17" rx="3" fill="url(#gbtn)" stroke="#6b7f9a" stroke-width="1"/>
<rect x="729.5" y="10.5" width="30.5" height="17" rx="3" fill="url(#gclose)" stroke="#5a1f1f" stroke-width="1"/>
<defs><linearGradient id="gbtn" x1="0" y1="0" x2="0" y2="1"><stop offset="0" stop-color="#c4d6ee"/><stop offset="0.45" stop-color="#b3c8e4"/><stop offset="0.5" stop-color="#9db6d6"/><stop offset="1" stop-color="#b8cde8"/></linearGradient><linearGradient id="gclose" x1="0" y1="0" x2="0" y2="1"><stop offset="0" stop-color="#e8a190"/><stop offset="0.45" stop-color="#d8806c"/><stop offset="0.5" stop-color="#c1432c"/><stop offset="1" stop-color="#d6745a"/></linearGradient></defs>
<rect x="671.5" y="17.5" width="10" height="3.6" rx="0.8" fill="#fff" stroke="#3c4656" stroke-width="1"/>
<rect x="705.5" y="14.5" width="10" height="7.6" rx="0.8" fill="#fff" stroke="#3c4656" stroke-width="1"/><rect x="708" y="17" width="5" height="2.6" fill="#7d8ea6"/>
<path d="M740.6,15 L748.4,21.8 M748.4,15 L740.6,21.8" stroke="#3a3a3a" stroke-width="3.1" stroke-linecap="round"/>
<path d="M740.6,15 L748.4,21.8 M748.4,15 L740.6,21.8" stroke="#fff" stroke-width="1.8" stroke-linecap="round"/>
</svg>
<div class="t" style="left:31.71px;top:13.00px;font-size:15px;line-height:15px;color:#000;transform:scaleX(0.9891);-webkit-text-stroke:0">Results (total 8 from tasker)</div>
<div class="t" style="left:68.54px;top:39.69px;font-size:11px;line-height:11px;color:#000;transform:scaleX(0.9639);">Results</div>
<div class="t" style="left:155.78px;top:39.49px;font-size:11px;line-height:11px;color:#000;transform:scaleX(0.9231);">Scale</div>
<div class="t" style="left:231.21px;top:38.69px;font-size:11px;line-height:11px;color:#000;transform:scaleX(0.9933);">Radiation</div>
<div class="t" style="left:327.16px;top:39.69px;font-size:11px;line-height:11px;color:#000;transform:scaleX(1.0387);">Export</div>
<div class="t" style="left:411.23px;top:39.69px;font-size:11px;line-height:11px;color:#000;transform:scaleX(1.0667);">Import</div>
<div class="t" style="left:496.80px;top:39.69px;font-size:11px;line-height:11px;color:#000;transform:scaleX(0.9625);">Additional</div>
<div class="t" style="left:35.50px;top:87.19px;font-size:11px;line-height:11px;color:#000;transform:scaleX(1.0000);">Config</div>
<div class="t" style="left:79.10px;top:87.19px;font-size:11px;line-height:11px;color:#000;transform:scaleX(0.9591);">2D Chart</div>
<div class="t" style="left:129.37px;top:87.19px;font-size:11px;line-height:11px;color:#8d8d8d;transform:scaleX(1.0292);">Freq.</div>
<div class="t" style="left:169.00px;top:87.19px;font-size:11px;line-height:11px;color:#000;transform:scaleX(0.9659);">3D Chart</div>
<div class="t" style="left:222.31px;top:87.19px;font-size:11px;line-height:11px;color:#000;transform:scaleX(0.9881);">Directive</div>
<div class="t" style="left:273.11px;top:87.19px;font-size:11px;line-height:11px;color:#000;transform:scaleX(0.9867);">Power</div>
<div class="t" style="left:313.80px;top:87.19px;font-size:11px;line-height:11px;color:#000;transform:scaleX(0.9896);">Absolute1</div>
<div class="t" style="left:371.20px;top:87.19px;font-size:11px;line-height:11px;color:#000;transform:scaleX(0.9442);">Absolute</div>
<div class="t" style="left:420.18px;top:87.19px;font-size:11px;line-height:11px;color:#000;transform:scaleX(1.0158);">Relative</div>
<div class="t" style="left:468.22px;top:87.19px;font-size:11px;line-height:11px;color:#000;transform:scaleX(0.9759);">Fields at 1m</div>
<div class="t" style="left:537.46px;top:87.19px;font-size:11px;line-height:11px;color:#000;transform:scaleX(0.9433);">Linear</div>
<div class="t" style="left:576.60px;top:87.19px;font-size:11px;line-height:11px;color:#000;transform:scaleX(0.9263);">Circular</div>
<div class="t" style="left:623.23px;top:87.19px;font-size:11px;line-height:11px;color:#8d8d8d;transform:scaleX(0.9737);">Periodic</div>
<div class="t" style="left:681.40px;top:87.19px;font-size:11px;line-height:11px;color:#000;transform:scaleX(0.9707);">Toolbars</div>
<div class="t" style="left:734.21px;top:87.19px;font-size:11px;line-height:11px;color:#000;transform:scaleX(0.9905);">Help</div>
<div class="t" style="left:551.80px;top:116.29px;font-size:11px;line-height:11px;color:#000;transform:scaleX(0.9714);">Curves</div>
<div class="t" style="left:653.50px;top:147.89px;font-size:11px;line-height:11px;color:#000;transform:scaleX(0.9260);">Command</div>
<div class="t" style="left:561.68px;top:177.89px;font-size:11px;line-height:11px;color:#000;transform:scaleX(1.1200);">No.</div>
<div class="t" style="left:631.91px;top:177.89px;font-size:11px;line-height:11px;color:#000;transform:scaleX(0.9893);">Data Series</div>
<div class="t" style="left:732.46px;top:177.89px;font-size:11px;line-height:11px;color:#000;transform:scaleX(0.9400);">NTF</div>
<div class="t" style="left:595.40px;top:198.39px;font-size:11px;line-height:11px;color:#000;transform:scaleX(1.0000);">Tasker</div>
<div class="t" style="left:584.40px;top:215.99px;font-size:11px;line-height:11px;color:#000;transform:scaleX(1.3000);">1.</div>
<div class="t" style="left:631.84px;top:215.99px;font-size:11px;line-height:11px;color:#000;transform:scaleX(1.0565);">|Etheta| in Eplane</div>
<div class="t" style="left:732.36px;top:215.99px;font-size:11px;line-height:11px;color:#000;transform:scaleX(1.0429);">5.8</div>
<div class="t" style="left:585.70px;top:232.95px;font-size:11px;line-height:11px;color:#000;transform:scaleX(1.1375);">2.</div>
<div class="t" style="left:632.90px;top:232.95px;font-size:11px;line-height:11px;color:#000;transform:scaleX(1.0563);">&lt;Etheta in Eplane</div>
<div class="t" style="left:732.36px;top:232.95px;font-size:11px;line-height:11px;color:#000;transform:scaleX(1.0429);">5.8</div>
<div class="t" style="left:585.70px;top:249.91px;font-size:11px;line-height:11px;color:#000;transform:scaleX(1.1375);">3.</div>
<div class="t" style="left:631.81px;top:249.91px;font-size:11px;line-height:11px;color:#000;transform:scaleX(1.0934);">|Ephi| in Hplane</div>
<div class="t" style="left:732.36px;top:249.91px;font-size:11px;line-height:11px;color:#000;transform:scaleX(1.0429);">5.8</div>
<div class="t" style="left:585.70px;top:266.87px;font-size:11px;line-height:11px;color:#000;transform:scaleX(1.1375);">4.</div>
<div class="t" style="left:632.90px;top:266.87px;font-size:11px;line-height:11px;color:#000;transform:scaleX(1.0923);">&lt;Ephi in Hplane</div>
<div class="t" style="left:732.36px;top:266.87px;font-size:11px;line-height:11px;color:#000;transform:scaleX(1.0429);">5.8</div>
<div class="t" style="left:584.40px;top:283.83px;font-size:11px;line-height:11px;color:#000;transform:scaleX(1.3000);">5.</div>
<div class="t" style="left:631.81px;top:283.83px;font-size:11px;line-height:11px;color:#000;transform:scaleX(1.0923);">|Copl45|</div>
<div class="t" style="left:732.36px;top:283.83px;font-size:11px;line-height:11px;color:#000;transform:scaleX(1.0429);">5.8</div>
<div class="t" style="left:585.70px;top:300.79px;font-size:11px;line-height:11px;color:#000;transform:scaleX(1.1375);">6.</div>
<div class="t" style="left:632.90px;top:300.79px;font-size:11px;line-height:11px;color:#000;transform:scaleX(1.0902);">&lt;Copl45</div>
<div class="t" style="left:732.36px;top:300.79px;font-size:11px;line-height:11px;color:#000;transform:scaleX(1.0429);">5.8</div>
<div class="t" style="left:584.40px;top:317.75px;font-size:11px;line-height:11px;color:#000;transform:scaleX(1.3000);">7.</div>
<div class="t" style="left:631.83px;top:317.75px;font-size:11px;line-height:11px;color:#000;transform:scaleX(1.0658);">|Cxpl45|</div>
<div class="t" style="left:732.36px;top:317.75px;font-size:11px;line-height:11px;color:#000;transform:scaleX(1.0429);">5.8</div>
<div class="t" style="left:585.70px;top:334.71px;font-size:11px;line-height:11px;color:#000;transform:scaleX(1.1375);">8.</div>
<div class="t" style="left:632.90px;top:334.71px;font-size:11px;line-height:11px;color:#000;transform:scaleX(1.0650);">&lt;Cxpl45</div>
<div class="t" style="left:732.36px;top:334.71px;font-size:11px;line-height:11px;color:#000;transform:scaleX(1.0429);">5.8</div>
<div class="t" style="left:8.90px;top:607.99px;font-size:11px;line-height:11px;color:#000;transform:scaleX(0.8970);">Values</div>
<div class="t" style="left:11.06px;top:630.94px;font-size:12px;line-height:12px;color:#000;transform:scaleX(1.0421);">Symbol</div>
<div class="t" style="left:66.07px;top:630.94px;font-size:12px;line-height:12px;color:#000;transform:scaleX(1.0290);">Name</div>
<div class="t" style="left:157.52px;top:630.94px;font-size:12px;line-height:12px;color:#000;transform:scaleX(0.9754);">Parameters</div>
<div class="t" style="left:269.70px;top:630.94px;font-size:12px;line-height:12px;color:#000;transform:scaleX(0.9727);">Antenna Parameters</div>
<div class="t" style="left:422.20px;top:630.94px;font-size:12px;line-height:12px;color:#000;transform:scaleX(1.0000);">Units</div>
<div class="t" style="left:66.16px;top:650.87px;font-size:11.5px;line-height:11.5px;color:#000;transform:scaleX(0.9438);">|Etheta| in Eplane</div>
<div class="t" style="left:65.79px;top:695.67px;font-size:11.5px;line-height:11.5px;color:#000;transform:scaleX(0.9113);">|Ephi| in Hplane</div>
<div class="t" style="left:157.80px;top:650.87px;font-size:11.5px;line-height:11.5px;color:#000;transform:scaleX(0.9859);">Theta=0 [deg]</div>
<div class="t" style="left:156.82px;top:665.87px;font-size:11.5px;line-height:11.5px;color:#000;transform:scaleX(0.9812);">rad= 32.941498</div>
<div class="t" style="left:157.80px;top:680.87px;font-size:11.5px;line-height:11.5px;color:#000;transform:scaleX(0.9771);">ang= 0</div>
<div class="t" style="left:422.34px;top:650.87px;font-size:11.5px;line-height:11.5px;color:#000;transform:scaleX(0.8579);">[dB]</div>
<div class="t" style="left:157.80px;top:695.77px;font-size:11.5px;line-height:11.5px;color:#000;transform:scaleX(0.9859);">Theta=0 [deg]</div>
<div class="t" style="left:156.82px;top:710.77px;font-size:11.5px;line-height:11.5px;color:#000;transform:scaleX(0.9812);">rad= 32.941498</div>
<div class="t" style="left:157.80px;top:725.77px;font-size:11.5px;line-height:11.5px;color:#000;transform:scaleX(0.9771);">ang= 0</div>
<div class="t" style="left:422.34px;top:695.77px;font-size:11.5px;line-height:11.5px;color:#000;transform:scaleX(0.8579);">[dB]</div>
<div class="t" style="left:267.53px;top:695.77px;font-size:11.5px;line-height:11.5px;color:#000;transform:scaleX(0.9692);">Fr=5.8 [GHz]</div>
<div class="t" style="left:267.52px;top:710.77px;font-size:11.5px;line-height:11.5px;color:#000;transform:scaleX(0.9848);">Pr=1.12357 [W]</div>
<div class="t" style="left:267.49px;top:725.77px;font-size:11.5px;line-height:11.5px;color:#000;transform:scaleX(1.0079);">Ef=101.481 [W/W*100%]</div>
<div class="t" style="left:267.51px;top:740.77px;font-size:11.5px;line-height:11.5px;color:#000;transform:scaleX(0.9862);">Rr=0 [Ohm]</div>
<div class="t" style="left:267.52px;top:755.77px;font-size:11.5px;line-height:11.5px;color:#000;transform:scaleX(0.9844);">Pi=1.10717 [W]</div>
<div class="t" style="left:268.58px;top:770.77px;font-size:11.5px;line-height:11.5px;color:#000;transform:scaleX(1.1226);">|I|^2=0 [A^2]</div>
<div class="t" style="left:223.62px;top:799.07px;font-size:11.5px;line-height:11.5px;color:#000;transform:scaleX(0.9819);">Fr=5.8000 Pr=1.1236 Ef=101.48 Rr=0.0000</div>
<div class="t" style="left:464.53px;top:799.07px;font-size:11.5px;line-height:11.5px;color:#000;transform:scaleX(0.9655);">Snap at=529484</div>
<div class="t" style="left:557.88px;top:799.07px;font-size:11.5px;line-height:11.5px;color:#000;transform:scaleX(0.9176);">Scale: dB.</div>
<div class="t" style="left:611.11px;top:799.07px;font-size:11.5px;line-height:11.5px;color:#000;transform:scaleX(0.8926);">Ppos: NTF</div>
<div class="t" style="left:666.56px;top:799.07px;font-size:11.5px;line-height:11.5px;color:#000;transform:scaleX(0.9402);">Name: cassant1</div>
<div class="t" style="left:267.20px;top:117.69px;font-size:11px;line-height:11px;color:#000;transform:scaleX(0.9500);-webkit-text-stroke:0.1px #000">90</div>
<div class="t" style="left:308.00px;top:121.69px;font-size:11px;line-height:11px;color:#000;transform:scaleX(0.9500);-webkit-text-stroke:0.1px #000">80</div>
<div class="t" style="left:348.10px;top:131.69px;font-size:11px;line-height:11px;color:#000;transform:scaleX(0.9500);-webkit-text-stroke:0.1px #000">70</div>
<div class="t" style="left:383.90px;top:148.69px;font-size:11px;line-height:11px;color:#000;transform:scaleX(0.9500);-webkit-text-stroke:0.1px #000">60</div>
<div class="t" style="left:418.60px;top:171.69px;font-size:11px;line-height:11px;color:#000;transform:scaleX(0.9500);-webkit-text-stroke:0.1px #000">50</div>
<div class="t" style="left:447.40px;top:200.69px;font-size:11px;line-height:11px;color:#000;transform:scaleX(0.9500);-webkit-text-stroke:0.1px #000">40</div>
<div class="t" style="left:471.00px;top:233.69px;font-size:11px;line-height:11px;color:#000;transform:scaleX(0.9500);-webkit-text-stroke:0.1px #000">30</div>
<div class="t" style="left:487.90px;top:270.69px;font-size:11px;line-height:11px;color:#000;transform:scaleX(0.9500);-webkit-text-stroke:0.1px #000">20</div>
<div class="t" style="left:497.44px;top:308.69px;font-size:11px;line-height:11px;color:#000;transform:scaleX(0.9636);-webkit-text-stroke:0.1px #000">10</div>
<div class="t" style="left:502.10px;top:348.69px;font-size:11px;line-height:11px;color:#000;transform:scaleX(1.0400);-webkit-text-stroke:0.1px #000">0.0</div>
<div class="t" style="left:498.60px;top:389.69px;font-size:11px;line-height:11px;color:#000;transform:scaleX(0.9500);-webkit-text-stroke:0.1px #000">350</div>
<div class="t" style="left:487.40px;top:428.69px;font-size:11px;line-height:11px;color:#000;transform:scaleX(0.9500);-webkit-text-stroke:0.1px #000">340</div>
<div class="t" style="left:470.50px;top:464.69px;font-size:11px;line-height:11px;color:#000;transform:scaleX(0.9500);-webkit-text-stroke:0.1px #000">330</div>
<div class="t" style="left:447.50px;top:497.69px;font-size:11px;line-height:11px;color:#000;transform:scaleX(0.9500);-webkit-text-stroke:0.1px #000">320</div>
<div class="t" style="left:418.80px;top:526.69px;font-size:11px;line-height:11px;color:#000;transform:scaleX(0.9500);-webkit-text-stroke:0.1px #000">310</div>
<div class="t" style="left:385.50px;top:549.69px;font-size:11px;line-height:11px;color:#000;transform:scaleX(0.9500);-webkit-text-stroke:0.1px #000">300</div>
<div class="t" style="left:348.50px;top:566.69px;font-size:11px;line-height:11px;color:#000;transform:scaleX(0.9500);-webkit-text-stroke:0.1px #000">290</div>
<div class="t" style="left:308.60px;top:576.69px;font-size:11px;line-height:11px;color:#000;transform:scaleX(0.9500);-webkit-text-stroke:0.1px #000">280</div>
<div class="t" style="left:268.70px;top:580.69px;font-size:11px;line-height:11px;color:#000;transform:scaleX(0.9500);-webkit-text-stroke:0.1px #000">270</div>
<div class="t" style="left:227.40px;top:576.69px;font-size:11px;line-height:11px;color:#000;transform:scaleX(0.9500);-webkit-text-stroke:0.1px #000">260</div>
<div class="t" style="left:187.50px;top:566.69px;font-size:11px;line-height:11px;color:#000;transform:scaleX(0.9500);-webkit-text-stroke:0.1px #000">250</div>
<div class="t" style="left:151.70px;top:549.69px;font-size:11px;line-height:11px;color:#000;transform:scaleX(0.9500);-webkit-text-stroke:0.1px #000">240</div>
<div class="t" style="left:117.40px;top:526.69px;font-size:11px;line-height:11px;color:#000;transform:scaleX(0.9500);-webkit-text-stroke:0.1px #000">230</div>
<div class="t" style="left:88.70px;top:497.69px;font-size:11px;line-height:11px;color:#000;transform:scaleX(0.9500);-webkit-text-stroke:0.1px #000">220</div>
<div class="t" style="left:65.40px;top:464.69px;font-size:11px;line-height:11px;color:#000;transform:scaleX(0.9500);-webkit-text-stroke:0.1px #000">210</div>
<div class="t" style="left:48.50px;top:428.69px;font-size:11px;line-height:11px;color:#000;transform:scaleX(0.9500);-webkit-text-stroke:0.1px #000">200</div>
<div class="t" style="left:36.84px;top:389.69px;font-size:11px;line-height:11px;color:#000;transform:scaleX(0.9588);-webkit-text-stroke:0.1px #000">190</div>
<div class="t" style="left:34.64px;top:349.69px;font-size:11px;line-height:11px;color:#000;transform:scaleX(0.9588);-webkit-text-stroke:0.1px #000">180</div>
<div class="t" style="left:36.94px;top:308.69px;font-size:11px;line-height:11px;color:#000;transform:scaleX(0.9588);-webkit-text-stroke:0.1px #000">170</div>
<div class="t" style="left:48.04px;top:270.69px;font-size:11px;line-height:11px;color:#000;transform:scaleX(0.9588);-webkit-text-stroke:0.1px #000">160</div>
<div class="t" style="left:64.94px;top:233.69px;font-size:11px;line-height:11px;color:#000;transform:scaleX(0.9588);-webkit-text-stroke:0.1px #000">150</div>
<div class="t" style="left:87.84px;top:200.69px;font-size:11px;line-height:11px;color:#000;transform:scaleX(0.9588);-webkit-text-stroke:0.1px #000">140</div>
<div class="t" style="left:117.14px;top:171.69px;font-size:11px;line-height:11px;color:#000;transform:scaleX(0.9588);-webkit-text-stroke:0.1px #000">130</div>
<div class="t" style="left:149.74px;top:148.69px;font-size:11px;line-height:11px;color:#000;transform:scaleX(0.9588);-webkit-text-stroke:0.1px #000">120</div>
<div class="t" style="left:186.78px;top:131.69px;font-size:11px;line-height:11px;color:#000;transform:scaleX(1.0188);-webkit-text-stroke:0.1px #000">110</div>
<div class="t" style="left:226.54px;top:121.69px;font-size:11px;line-height:11px;color:#000;transform:scaleX(0.9588);-webkit-text-stroke:0.1px #000">100</div>
<div class="t" style="left:74.30px;top:344.49px;font-size:11px;line-height:11px;color:#000;transform:scaleX(0.9712);-webkit-text-stroke:0.1px #000">30.000000</div>
<div class="t" style="left:277.20px;top:344.49px;font-size:11px;line-height:11px;color:#000;transform:scaleX(0.9891);-webkit-text-stroke:0.1px #000">-30.000000</div>
</body></html>
